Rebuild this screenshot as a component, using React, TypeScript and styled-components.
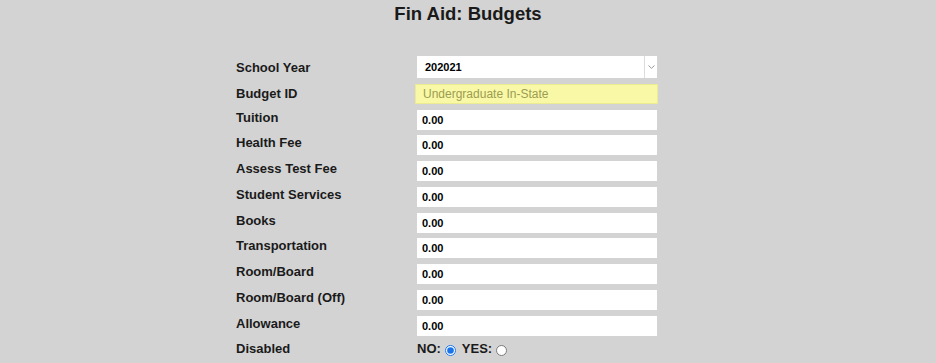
import * as React from 'react';
import styled, { createGlobalStyle } from 'styled-components';

const GlobalStyle = createGlobalStyle`
  html, body {
    margin: 0;
    padding: 0;
    background: #d3d3d3;
  }
  body {
    font-family: 'Liberation Sans', Arial, sans-serif;
    color: #111;
  }
`;

const Page = styled.div`
  width: 936px;
  height: 363px;
  overflow: hidden;
  background: #d3d3d3;
`;

const Title = styled.h1`
  margin: 0;
  padding-top: 3px;
  text-align: center;
  font-family: 'Liberation Sans', Arial, sans-serif;
  font-size: 18.5px;
  font-weight: bold;
  color: #1a1a1a;
`;

const Form = styled.div`
  display: grid;
  grid-template-columns: 181px 240px;
  grid-auto-rows: auto;
  row-gap: 5.75px;
  margin: 31px 0 0 236px;
  align-items: center;
`;

const Label = styled.div<{ $lift?: boolean }>`
  font-family: 'Liberation Sans', Arial, sans-serif;
  font-weight: bold;
  font-size: 13px;
  color: #1a1a1a;
  padding-bottom: ${({ $lift }) => ($lift ? '5px' : '0')};
`;

const TextField = styled.div`
  height: 20px;
  background: #fff;
  display: flex;
  align-items: center;
  padding-left: 5px;
  font-size: 11px;
  font-weight: bold;
  color: #000;
`;

const Select = styled.div`
  height: 22px;
  background: #fff;
  display: flex;
  align-items: stretch;
`;

const SelectValue = styled.div`
  flex: 1;
  display: flex;
  align-items: center;
  padding-left: 8px;
  font-size: 11px;
  font-weight: bold;
  color: #000;
`;

const SelectArrow = styled.div`
  width: 12px;
  border-left: 1px solid #dcdcdc;
  display: flex;
  align-items: center;
  justify-content: center;
`;

const ReadOnlyField = styled.div`
  height: 18px;
  margin: 0 -1px 0 -2px;
  background: #f8f8a6;
  border: 1px solid #ebeb92;
  display: flex;
  align-items: center;
  padding-left: 7px;
  font-size: 12px;
  color: #9c9c52;
`;

const RadioGroup = styled.div`
  display: flex;
  align-items: center;
  font-family: 'Liberation Sans', Arial, sans-serif;
  font-weight: bold;
  font-size: 13px;
  color: #1a1a1a;
`;

const RadioLabel = styled.label`
  display: flex;
  align-items: center;
  margin-right: 6px;
`;

const Radio = styled.input`
  width: 11px;
  height: 11px;
  margin: 4px 0 0 4px;
  accent-color: #1a73e8;
`;

const feeRows = [
  'Tuition',
  'Health Fee',
  'Assess Test Fee',
  'Student Services',
  'Books',
  'Transportation',
  'Room/Board',
  'Room/Board (Off)',
  'Allowance',
];

export default function App() {
  const [disabled, setDisabled] = React.useState(false);
  return (
    <Page>
      <GlobalStyle />
      <Title>Fin Aid: Budgets</Title>
      <Form>
        <Label>School Year</Label>
        <Select>
          <SelectValue>202021</SelectValue>
          <SelectArrow>
            <svg width="7" height="4" viewBox="0 0 7 4">
              <path d="M0.5 0.5 L3.5 3.3 L6.5 0.5" fill="none" stroke="#9a9a9a" strokeWidth="1" />
            </svg>
          </SelectArrow>
        </Select>
        <Label>Budget ID</Label>
        <ReadOnlyField>Undergraduate In-State</ReadOnlyField>
        {feeRows.map((name) => (
          <React.Fragment key={name}>
            <Label $lift>{name}</Label>
            <TextField>0.00</TextField>
          </React.Fragment>
        ))}
        <Label>Disabled</Label>
        <RadioGroup>
          <RadioLabel>
            NO:
            <Radio type="radio" name="disabled" checked={!disabled} onChange={() => setDisabled(false)} />
          </RadioLabel>
          <RadioLabel>
            YES:
            <Radio type="radio" name="disabled" checked={disabled} onChange={() => setDisabled(true)} />
          </RadioLabel>
        </RadioGroup>
      </Form>
    </Page>
  );
}
